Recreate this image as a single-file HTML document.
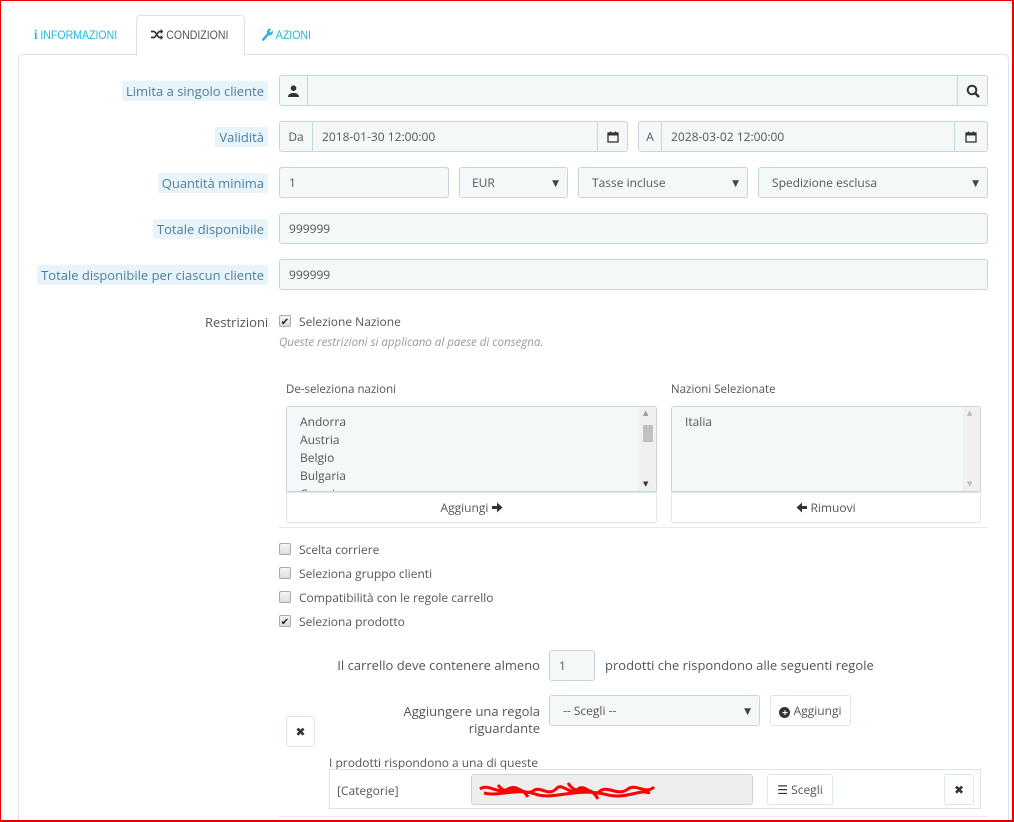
<!DOCTYPE html>
<html><head><meta charset="utf-8"><style>
*{box-sizing:border-box;margin:0;padding:0}
html,body{width:1014px;height:822px;overflow:hidden}
body{position:relative;background:#fff;font-family:"Open Sans","DejaVu Sans","Liberation Sans",sans-serif;font-size:12px;color:#555}
.a{position:absolute}
.frame{left:0;top:0;width:1014px;height:822px;border:1px solid #e00;border-right-width:2px;border-bottom:2px solid #d00;z-index:10}
.tab{top:15px;height:40px;line-height:40px;font-family:"Liberation Sans",sans-serif;font-size:12px;color:#25b9d7;transform-origin:left center;transform:scaleX(0.88);white-space:nowrap}
.panel{left:18px;top:54px;width:991px;height:800px;border:1px solid #dde3e6;border-radius:5px}
.lbl{height:20px;line-height:20px;padding:0 4px;background:#e8f3fa;color:#4d7ea0;font-size:13px;border-radius:2px;text-align:right}
.inp{background:#f5f8f9;border:1px solid #c7d6db;border-radius:3px;height:31px;line-height:29px;padding-left:9px;color:#555;font-size:12px}
.add{background:#f5f8f9;border:1px solid #c7d6db;height:31px;line-height:29px;text-align:center;color:#555}
.sel::after{content:"▼";position:absolute;right:8px;top:0;font-size:9px;color:#444}
.btn{background:#fff;border:1px solid #dbe6e9;border-radius:3px;text-align:center;color:#555;font-size:12px}
.cb{width:12px;height:12px;border:1px solid #aaa;border-radius:2px;background:linear-gradient(#f4f4f4,#ddd);font-size:10px;line-height:10px;text-align:center;color:#222}
.t{font-size:12px;color:#555;white-space:nowrap}
.hr{height:1px;background:#e6eaec}
</style></head><body>
<div class="a frame"></div>
<div class="a" style="left:136px;top:15px;width:109px;height:41px;border:1px solid #dde3e6;border-bottom:none;border-radius:4px 4px 0 0;background:#fff;z-index:2"></div>
<div class="a tab" style="left:34px"><b style="font-family:Liberation Serif;font-size:14px">i</b> INFORMAZIONI</div>
<div class="a tab" style="left:151px;color:#555;z-index:3"><svg width="14" height="11" viewBox="0 0 14 11" style="vertical-align:-1px"><path d="M0 2.5h3c3 0 4 6 7 6h2M0 8.5h3c3 0 4-6 7-6h2" fill="none" stroke="#333" stroke-width="1.8"/><path d="M11 0l3 2.5-3 2.5zM11 6l3 2.5-3 2.5z" fill="#333"/></svg> CONDIZIONI</div>
<div class="a tab" style="left:262px"><svg width="13" height="13" viewBox="0 0 13 13" style="vertical-align:-2px"><path d="M1.5 11.5L7 6" stroke="#25b9d7" stroke-width="2.8" stroke-linecap="round"/><circle cx="9" cy="4" r="3.4" fill="#25b9d7"/><path d="M9 4L12.5 0.5" stroke="#fff" stroke-width="2"/></svg> AZIONI</div>
<div class="a panel"></div>

<div class="a lbl" style="right:746px;top:81px">Limita a singolo cliente</div>
<div class="a add" style="left:279px;top:75px;width:29px;border-radius:3px 0 0 3px"><svg width="11" height="12" viewBox="0 0 11 12" style="margin-top:9px"><circle cx="5.5" cy="3.2" r="2.8" fill="#333"/><path d="M0 12 C0 6.5 11 6.5 11 12Z" fill="#333"/></svg></div>
<div class="a inp" style="left:307px;top:75px;width:651px;border-radius:0"></div>
<div class="a add" style="left:957px;top:75px;width:31px;border-radius:0 3px 3px 0"><svg width="14" height="14" viewBox="0 0 14 14" style="margin-top:8px"><circle cx="6" cy="6" r="4.3" fill="none" stroke="#333" stroke-width="2"/><path d="M9 9 L13 13" stroke="#333" stroke-width="2.5"/></svg></div>

<div class="a lbl" style="right:746px;top:127px">Validità</div>
<div class="a add" style="left:279px;top:121px;width:34px;border-radius:3px 0 0 3px">Da</div>
<div class="a inp" style="left:312px;top:121px;width:286px;border-radius:0">2018-01-30 12:00:00</div>
<div class="a add" style="left:597px;top:121px;width:31px;border-radius:0 3px 3px 0"><svg width="12" height="12" viewBox="0 0 12 12" style="margin-top:9px"><rect x="1" y="2" width="10" height="9" fill="none" stroke="#333" stroke-width="1.3"/><rect x="1" y="2" width="10" height="2.5" fill="#333"/><path d="M3.5 0.5v2.5M8.5 0.5v2.5" stroke="#333" stroke-width="1.3"/></svg></div>
<div class="a add" style="left:638px;top:121px;width:24px;border-radius:3px 0 0 3px">A</div>
<div class="a inp" style="left:661px;top:121px;width:294px;border-radius:0">2028-03-02 12:00:00</div>
<div class="a add" style="left:954px;top:121px;width:34px;border-radius:0 3px 3px 0"><svg width="12" height="12" viewBox="0 0 12 12" style="margin-top:9px"><rect x="1" y="2" width="10" height="9" fill="none" stroke="#333" stroke-width="1.3"/><rect x="1" y="2" width="10" height="2.5" fill="#333"/><path d="M3.5 0.5v2.5M8.5 0.5v2.5" stroke="#333" stroke-width="1.3"/></svg></div>

<div class="a lbl" style="right:746px;top:173px">Quantità minima</div>
<div class="a inp" style="left:279px;top:167px;width:170px">1</div>
<div class="a inp sel" style="left:459px;top:167px;width:109px;padding-left:12px">EUR</div>
<div class="a inp sel" style="left:578px;top:167px;width:170px;padding-left:13px">Tasse incluse</div>
<div class="a inp sel" style="left:758px;top:167px;width:230px;padding-left:13px">Spedizione esclusa</div>

<div class="a lbl" style="right:746px;top:219px">Totale disponibile</div>
<div class="a inp" style="left:279px;top:213px;width:709px">999999</div>
<div class="a lbl" style="right:746px;top:265px">Totale disponibile per ciascun cliente</div>
<div class="a inp" style="left:279px;top:259px;width:709px">999999</div>

<div class="a t" style="left:205px;top:313px;font-size:13px">Restrizioni</div>
<div class="a cb" style="left:279px;top:315px">✔</div>
<div class="a t" style="left:299px;top:313px">Selezione Nazione</div>
<div class="a t" style="left:279px;top:335px;font-style:italic;color:#999;font-size:11.5px">Queste restrizioni si applicano al paese di consegna.</div>

<div class="a t" style="left:286px;top:382px;font-size:11.5px">De-seleziona nazioni</div>
<div class="a t" style="left:671px;top:382px;font-size:11.5px">Nazioni Selezionate</div>
<div class="a" style="left:286px;top:406px;width:371px;height:86px;border:1px solid #c7d6db;background:#f5f8f9;overflow:hidden;border-radius:3px 3px 0 0">
<div style="position:absolute;left:13px;top:6px;line-height:18px;font-size:12px">Andorra<br>Austria<br>Belgio<br>Bulgaria<br>Croazia</div>
<div style="position:absolute;right:0;top:0;width:17px;height:84px;background:#f0f0f0"><div style="position:absolute;left:4px;top:18px;width:10px;height:17px;background:#c1c1c1"></div><div style="position:absolute;left:4px;top:2px;font-size:7px;color:#999">▲</div><div style="position:absolute;left:4px;bottom:2px;font-size:7px;color:#333">▼</div></div></div>
<div class="a" style="left:671px;top:406px;width:310px;height:86px;border:1px solid #c7d6db;background:#f5f8f9;overflow:hidden;border-radius:3px 3px 0 0">
<div style="position:absolute;left:13px;top:6px;line-height:18px">Italia</div>
<div style="position:absolute;right:0;top:0;width:17px;height:84px;background:#f0f0f0"><div style="position:absolute;left:4px;top:2px;font-size:7px;color:#bbb">▲</div><div style="position:absolute;left:4px;bottom:2px;font-size:7px;color:#bbb">▼</div></div></div>
<div class="a btn" style="left:286px;top:492px;width:371px;height:31px;line-height:29px">Aggiungi <svg width="11" height="11" viewBox="0 0 11 11" style="vertical-align:-1px"><path d="M0 4h5V0.5L10.5 5.5 5 10.5V7H0z" fill="#333"/></svg></div>
<div class="a btn" style="left:671px;top:492px;width:310px;height:31px;line-height:29px"><svg width="11" height="11" viewBox="0 0 11 11" style="vertical-align:-1px"><path d="M11 4H6V0.5L0.5 5.5 6 10.5V7h5z" fill="#333"/></svg> Rimuovi</div>
<div class="a hr" style="left:279px;top:527px;width:709px"></div>

<div class="a cb" style="left:279px;top:543px"></div><div class="a t" style="left:299px;top:541px">Scelta corriere</div>
<div class="a cb" style="left:279px;top:567px"></div><div class="a t" style="left:299px;top:565px">Seleziona gruppo clienti</div>
<div class="a cb" style="left:279px;top:591px"></div><div class="a t" style="left:299px;top:589px">Compatibilità con le regole carrello</div>
<div class="a cb" style="left:279px;top:615px">✔</div><div class="a t" style="left:299px;top:613px">Seleziona prodotto</div>

<div class="a t" style="right:474px;top:656px;font-size:13px">Il carrello deve contenere almeno</div>
<div class="a inp" style="left:549px;top:650px;width:46px;height:31px">1</div>
<div class="a t" style="left:605px;top:656px;font-size:13px">prodotti che rispondono alle seguenti regole</div>

<div class="a t" style="right:474px;top:703px;font-size:13px;text-align:right;line-height:17px">Aggiungere una regola<br>riguardante</div>
<div class="a inp sel" style="left:549px;top:695px;width:211px;padding-left:13px">-- Scegli --</div>
<div class="a btn" style="left:770px;top:695px;width:81px;height:31px;line-height:29px"><b style="display:inline-block;width:11px;height:11px;border-radius:50%;background:#333;color:#fff;font-size:10px;line-height:11px;vertical-align:-1px">+</b> Aggiungi</div>
<div class="a btn" style="left:286px;top:716px;width:29px;height:31px;line-height:29px;font-weight:bold;color:#333">✖</div>

<div class="a t" style="left:329px;top:754px">I prodotti rispondono a una di queste</div>
<div class="a" style="left:329px;top:769px;width:652px;height:40px;border:1px solid #dde3e6"></div>
<div class="a t" style="left:337px;top:782px">[Categorie]</div>
<div class="a" style="left:471px;top:774px;width:282px;height:31px;background:#eee;border:1px solid #c7d6db;border-radius:3px"></div>
<svg class="a" style="left:478px;top:781px" width="178" height="24" viewBox="0 0 178 24"><path d="M2 8 C10 2 20 14 30 8 C40 2 45 16 55 10 C62 4 70 16 78 8 C84 0 92 16 100 8 C108 2 114 18 122 10 C130 4 140 16 150 8 C158 2 168 14 176 6 M6 12 C20 16 40 6 60 14 C80 18 100 6 130 14 C150 18 160 8 172 12 M20 4 C30 18 40 0 50 16 M90 2 C100 18 110 0 120 18" fill="none" stroke="#f00" stroke-width="3"/></svg>
<div class="a btn" style="left:767px;top:774px;width:66px;height:31px;line-height:29px"><b style="color:#333">☰</b> Scegli</div>
<div class="a btn" style="left:944px;top:774px;width:30px;height:31px;line-height:29px;font-weight:bold;color:#333">✖</div>
<div class="a hr" style="left:279px;top:816px;width:709px"></div>
</body></html>
